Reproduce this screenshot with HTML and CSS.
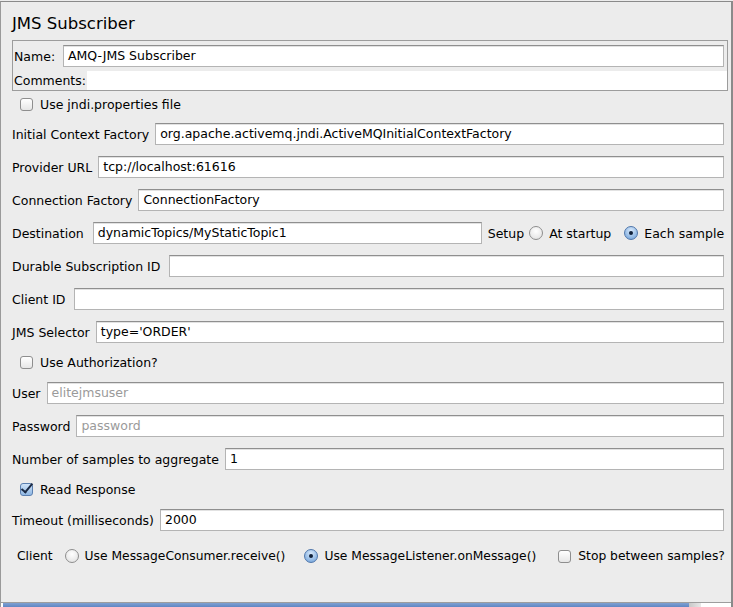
FILE: index.html
```html
<!DOCTYPE html>
<html>
<head>
<meta charset="utf-8">
<link rel="stylesheet" href="styles.css">
</head>
<body>
<div class="frame">
  <h1 class="title">JMS Subscriber</h1>
  <div class="namebox">
    <div class="namerow">
      <span class="lbl">Name:</span>
      <div class="field">AMQ-JMS Subscriber</div>
    </div>
    <div class="commentrow">
      <span class="lbl">Comments:</span>
      <div class="comment"></div>
    </div>
  </div>

  <div class="checkrow first">
    <span class="check"></span><span>Use jndi.properties file</span>
  </div>

  <div class="rows">
    <div class="row"><span class="lbl">Initial Context Factory</span><div class="field">org.apache.activemq.jndi.ActiveMQInitialContextFactory</div></div>
    <div class="row"><span class="lbl">Provider URL</span><div class="field">tcp://localhost:61616</div></div>
    <div class="row"><span class="lbl">Connection Factory</span><div class="field">ConnectionFactory</div></div>
    <div class="row">
      <span class="lbl wide">Destination</span><div class="field dest">dynamicTopics/MyStaticTopic1</div>
      <span class="setup">Setup</span>
      <span class="radio"></span><span class="opt">At startup</span>
      <span class="radio on"></span><span class="opt">Each sample</span>
    </div>
    <div class="row"><span class="lbl wide">Durable Subscription ID</span><div class="field"></div></div>
    <div class="row"><span class="lbl wide">Client ID</span><div class="field"></div></div>
    <div class="row"><span class="lbl">JMS Selector</span><div class="field">type='ORDER'</div></div>
    <div class="checkrow"><span class="check"></span><span>Use Authorization?</span></div>
    <div class="row"><span class="lbl">User</span><div class="field ph">elitejmsuser</div></div>
    <div class="row"><span class="lbl">Password</span><div class="field ph">password</div></div>
    <div class="row"><span class="lbl">Number of samples to aggregate</span><div class="field">1</div></div>
    <div class="checkrow"><span class="check on"></span><span>Read Response</span></div>
    <div class="row"><span class="lbl">Timeout (milliseconds)</span><div class="field">2000</div></div>
    <div class="clientrow">
      <span class="lbl">Client</span>
      <span class="radio"></span><span class="opt">Use MessageConsumer.receive()</span>
      <span class="radio on"></span><span class="opt">Use MessageListener.onMessage()</span>
      <span class="check"></span><span class="opt">Stop between samples?</span>
    </div>
  </div>
  <div class="bottombar"><div class="blue"></div><div class="knob"></div></div>
</div>
</body>
</html>
```

FILE: styles.css
```css
html, body {
  margin: 0;
  padding: 0;
  background: #ececec;
}
body {
  font-family: "DejaVu Sans", sans-serif;
  font-size: 12.5px;
  color: #000;
}
.frame {
  width: 733px;
  box-sizing: border-box;
  border-top: 1px solid #8a8a8a;
  border-left: 1px solid #9a9a9a;
  border-right: 2px solid #8a8a8a;
  margin-top: 1px;
  height: 606px;
  position: relative;
  overflow: hidden;
  display: flex;
  flex-direction: column;
}
.title {
  margin: 0;
  font-weight: normal;
  font-size: 16.5px;
  height: 38px;
  line-height: 20px;
  padding: 12px 0 0 11px;
  box-sizing: border-box;
}
.namebox {
  margin-left: 11px;
  width: 716px;
  height: 51px;
  box-sizing: border-box;
  border: 1px solid #9c9c9c;
  display: flex;
  flex-direction: column;
}
.namerow {
  display: flex;
  align-items: center;
  height: 30px;
  padding: 0 3px 0 1px;
}
.namerow .lbl { width: 49px; }
.namerow .field { flex: 1; }
.commentrow {
  display: flex;
  align-items: center;
  height: 19px;
  padding-left: 1px;
}
.commentrow .lbl { width: 73px; }
.comment {
  flex: 1;
  height: 100%;
  background: #fff;
}
.field {
  height: 22px;
  box-sizing: border-box;
  background: #fff;
  border: 1px solid #b4b4b4;
  border-top-color: #8f8f8f;
  box-shadow: inset 0 1px 0 #e2e2e2;
  padding: 0 4px;
  line-height: 20px;
  white-space: nowrap;
  overflow: hidden;
  flex: 1;
}
.field.ph { color: #9a9a9a; }
.field.dest { flex: 0 0 389px; }
.checkrow {
  display: flex;
  align-items: center;
  height: 17px;
  padding-left: 19px;
  gap: 7px;
}
.checkrow.first { height: 22px; margin-top: 2px; margin-bottom: 8px; }
.rows {
  display: flex;
  flex-direction: column;
  gap: 11px;
}
.row {
  display: flex;
  align-items: center;
  height: 22px;
  padding: 0 7px 0 11px;
}
.row .lbl { margin-right: 6px; white-space: nowrap; }
.row .lbl.wide { margin-right: 9px; }
.setup { margin: 0 5px 0 6px; }
.opt { margin: 0 0 0 6px; white-space: nowrap; }
.opt + .radio { margin-left: 13px; }
.clientrow {
  display: flex;
  align-items: center;
  height: 22px;
  margin-top: 3px;
  padding-left: 16px;
  font-size: 12.3px;
  white-space: nowrap;
}
.clientrow .lbl { margin-right: 12px; }
.clientrow .opt + .radio { margin-left: 19px; }
.clientrow .check { margin-left: 22px; }
.clientrow .check + .opt { margin-left: 7px; }
.check {
  width: 13px;
  height: 13px;
  box-sizing: border-box;
  border: 1px solid #8e8e8e;
  border-radius: 3px;
  background: linear-gradient(#ffffff, #e6e6e6);
  flex: none;
  position: relative;
}
.check.on {
  border-color: #5a7fb0;
  background: linear-gradient(#cfe3f8, #8fb7e3);
}
.check.on::after {
  content: "";
  position: absolute;
  left: 3px;
  top: -3px;
  width: 4px;
  height: 10px;
  border: solid #1b2a44;
  border-width: 0 2px 2px 0;
  transform: rotate(40deg);
}
.radio {
  width: 14px;
  height: 14px;
  box-sizing: border-box;
  border-radius: 50%;
  border: 1px solid #8e8e8e;
  background: radial-gradient(circle at 50% 35%, #ffffff, #dedede);
  flex: none;
  position: relative;
}
.radio.on {
  border-color: #4f76ab;
  background: radial-gradient(circle at 50% 30%, #d8e9fb, #6c9fd8);
}
.radio.on::after {
  content: "";
  position: absolute;
  left: 4px;
  top: 4px;
  width: 4px;
  height: 4px;
  border-radius: 50%;
  background: #10213a;
}
.bottombar {
  position: absolute;
  left: 0;
  right: 0;
  bottom: 0;
  height: 4px;
  display: flex;
  border-top: 1px solid #9d9d9d;
  background: #ffffff;
}
.blue {
  margin-left: 2px;
  width: 686px;
  background: linear-gradient(#7fa0d2, #5f86c4);
}
.knob {
  width: 12px;
  background: linear-gradient(90deg, #c8c8c8, #e8e8e8);
}
```
